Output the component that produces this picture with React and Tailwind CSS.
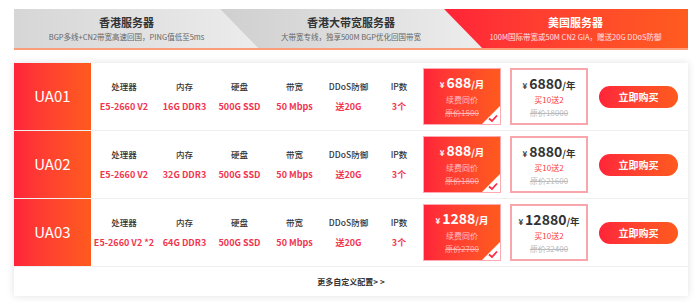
const plans = [
  { name: 'UA01', cpu: 'E5-2660 V2', mem: '16G DDR3', month: '688', orig: '1500', year: '6880', yorig: '18000' },
  { name: 'UA02', cpu: 'E5-2660 V2', mem: '32G DDR3', month: '888', orig: '1800', year: '8880', yorig: '21600' },
  { name: 'UA03', cpu: 'E5-2660 V2 *2', mem: '64G DDR3', month: '1288', orig: '2700', year: '12880', yorig: '32400' },
]

/* 스펙 한 칸: 라벨 + 값 */
function Spec({ label, value, className }) {
  return (
    <div className={`flex flex-col items-center gap-[9px] ${className}`}>
      <span className="text-[8.5px] leading-[12px] text-[#333] font-medium whitespace-nowrap">{label}</span>
      <span className="text-[9px] leading-[12px] text-[#f2354f] font-bold whitespace-nowrap">{value}</span>
    </div>
  )
}

function PlanRow({ p }) {
  return (
    <div className="flex items-center h-[68px] border-b border-[#efefef]">
      <div className="w-[77px] h-full flex items-center justify-center bg-linear-to-r from-[#ff2339] to-[#ff5a1d] text-white text-[15px]">
        {p.name}
      </div>
      <Spec label="处理器" value={p.cpu} className="w-[66px]" />
      <Spec label="内存" value={p.mem} className="w-[55px]" />
      <Spec label="硬盘" value="500G SSD" className="w-[55px]" />
      <Spec label="带宽" value="50 Mbps" className="w-[55px]" />
      <Spec label="DDoS防御" value="送20G" className="w-[53px]" />
      <Spec label="IP数" value="3个" className="w-[48px]" />

      {/* 월 결제 (선택됨) */}
      <div className="relative w-[78px] h-[57px] flex flex-col items-center pt-[3px] border border-[#ffaab3] bg-linear-to-r from-[#ff2339] to-[#ff5a1d]">
        <div className="h-[18px] flex items-baseline text-white font-bold">
          <span className="text-[8px] mr-[2px]">¥</span>
          <span className="text-[14px]">{p.month}</span>
          <span className="text-[9.5px]">/月</span>
        </div>
        <span className="mt-[3px] text-[8px] leading-[13px] text-[#ffc0c0]">续费同价</span>
        <span className="text-[8px] leading-[13px] text-[#ffb3b3] line-through">原价{p.orig}</span>
        <svg className="absolute right-0 bottom-0" width="18" height="18" viewBox="0 0 18 18">
          <polygon points="18,0 18,18 0,18" fill="#fff" />
          <path d="M7 12.5 L10 15 L15 9.5" fill="none" stroke="#ff2a44" strokeWidth="1.8" />
        </svg>
      </div>

      {/* 연 결제 */}
      <div className="ml-[9px] w-[78px] h-[57px] flex flex-col items-center pt-[3px] border-2 border-[#f8a6ac] bg-white">
        <div className="h-[18px] flex items-baseline text-[#333] font-bold">
          <span className="text-[8px] mr-[2px]">¥</span>
          <span className="text-[14px]">{p.year}</span>
          <span className="text-[9.5px]">/年</span>
        </div>
        <span className="mt-[2px] text-[8px] leading-[13px] text-[#ff3b3b]">买10送2</span>
        <span className="text-[8px] leading-[13px] text-[#bbb] line-through">原价{p.yorig}</span>
      </div>

      <button className="ml-[11px] w-[79px] h-[22px] rounded-full bg-linear-to-r from-[#ff2339] to-[#ff5a1d] text-white text-[10px] font-bold">
        立即购买
      </button>
    </div>
  )
}

export default function App() {
  return (
    <div className="w-[700px] h-[302px] bg-white pt-[9px] font-['Noto_Sans_CJK_SC','Noto_Sans',sans-serif]">
      <div className="ml-[14px] w-[674px]">
        {/* 상단 탭 */}
        <div className="flex h-[39px]">
          <div className="w-[244px] pr-[19px] pt-[6px] flex flex-col items-center bg-linear-to-r from-[#d6d6d6] to-[#ececec] [clip-path:polygon(0_0,calc(100%_-_38px)_0,100%_100%,0_100%)]">
            <span className="text-[11px] leading-[14px] font-bold text-[#333]">香港服务器</span>
            <span className="mt-[2px] text-[7.5px] leading-[11px] text-[#666] whitespace-nowrap">BGP多线+CN2带宽高速回国，PING值低至5ms</span>
          </div>
          <div className="-ml-[38px] w-[262px] px-[19px] pt-[6px] flex flex-col items-center bg-linear-to-r from-[#cfcfcf] to-[#ededed] [clip-path:polygon(0_0,calc(100%_-_38px)_0,100%_100%,38px_100%)]">
            <span className="text-[11px] leading-[14px] font-bold text-[#333]">香港大带宽服务器</span>
            <span className="mt-[2px] text-[7.5px] leading-[11px] text-[#666] whitespace-nowrap">大带宽专线，独享500M BGP优化回国带宽</span>
          </div>
          <div className="-ml-[38px] flex-1 pl-[19px] pt-[6px] flex flex-col items-center bg-linear-to-r from-[#ff2238] to-[#ff5b1e] [clip-path:polygon(0_0,100%_0,100%_100%,38px_100%)]">
            <span className="text-[11px] leading-[14px] font-bold text-white">美国服务器</span>
            <span className="mt-[2px] text-[7.5px] leading-[11px] text-[#ffe0e0] whitespace-nowrap">100M国际带宽或50M CN2 GIA，赠送20G DDoS防御</span>
          </div>
        </div>
        <div className="h-[2px] bg-[#fb9c7a]" />

        {/* 요금 카드 */}
        <div className="mt-[13px] bg-white shadow-[0_0_8px_rgba(0,0,0,0.12)]">
          {plans.map(p => <PlanRow key={p.name} p={p} />)}
          <div className="h-[29px] flex items-center justify-center text-[8px] font-bold text-[#333]">
            更多自定义配置&gt; &gt;
          </div>
        </div>
      </div>
    </div>
  )
}
